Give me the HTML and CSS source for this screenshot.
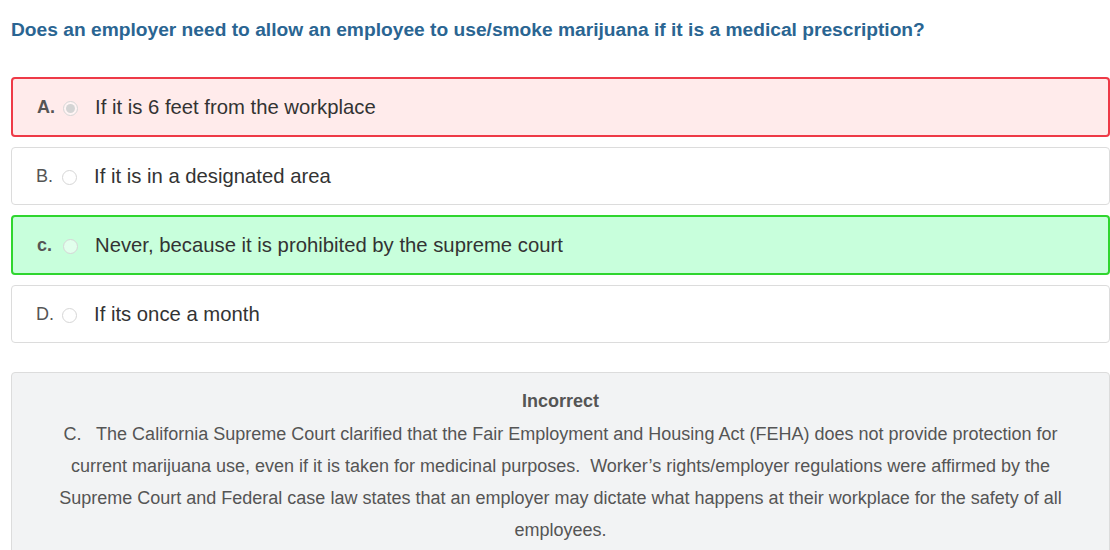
FILE: index.html
```html
<!DOCTYPE html>
<html>
<head>
<meta charset="utf-8">
<link rel="stylesheet" href="styles.css">
</head>
<body>
<div class="quiz">
  <h2 class="question">Does an employer need to allow an employee to use/smoke marijuana if it is a medical prescription?</h2>
  <div class="options">
    <div class="option wrong">
      <span class="label bold">A.</span>
      <span class="radio checked"></span>
      <span class="text">If it is 6 feet from the workplace</span>
    </div>
    <div class="option">
      <span class="label">B.</span>
      <span class="radio"></span>
      <span class="text">If it is in a designated area</span>
    </div>
    <div class="option right">
      <span class="label bold">c.</span>
      <span class="radio"></span>
      <span class="text">Never, because it is prohibited by the supreme court</span>
    </div>
    <div class="option">
      <span class="label">D.</span>
      <span class="radio"></span>
      <span class="text">If its once a month</span>
    </div>
  </div>
  <div class="explain">
    <div class="verdict">Incorrect</div>
    <p class="reason">C.&nbsp;&nbsp; The California Supreme Court clarified that the Fair Employment and Housing Act (FEHA) does not provide protection for current marijuana use, even if it is taken for medicinal purposes.&nbsp; Worker’s rights/employer regulations were affirmed by the Supreme Court and Federal case law states that an employer may dictate what happens at their workplace for the safety of all employees.</p>
  </div>
</div>
</body>
</html>
```

FILE: styles.css
```css
html, body {
  margin: 0;
  padding: 0;
  background: #ffffff;
  font-family: "Liberation Sans", Arial, sans-serif;
}
.quiz {
  margin-left: 11px;
  width: 1099px;
  padding-top: 19px;
}
.question {
  margin: 0 0 36px 0;
  font-size: 19.2px;
  font-weight: bold;
  color: #2a6592;
  line-height: 22px;
}
.options {
  display: flex;
  flex-direction: column;
  gap: 10px;
}
.option {
  display: flex;
  align-items: center;
  height: 56px;
  border: 1px solid #dcdcdc;
  border-radius: 4px;
  padding-left: 24px;
  background: #ffffff;
}
.option.wrong {
  border: 2px solid #ee3a47;
  background: #ffebeb;
  padding-left: 24px;
}
.option.right {
  border: 2px solid #2fd62f;
  background: #c8ffdc;
  padding-left: 24px;
}
.label {
  font-size: 18px;
  color: #555555;
  width: 26px;
}
.label.bold {
  font-weight: bold;
}
.radio {
  width: 13px;
  height: 13px;
  border-radius: 50%;
  border: 1px solid #d6d6d6;
  background: rgba(255, 255, 255, 0.45);
  margin-top: 3px;
  margin-right: 17px;
  display: flex;
  align-items: center;
  justify-content: center;
}
.radio.checked::after {
  content: "";
  width: 9px;
  height: 9px;
  border-radius: 50%;
  background: #d4d4d4;
}
.text {
  font-size: 20.3px;
  color: #333333;
}
.explain {
  margin-top: 29px;
  background: #f2f3f4;
  border: 1px solid #dcdcdc;
  border-radius: 4px;
  padding: 16px 40px 20px;
  text-align: center;
  color: #555555;
}
.verdict {
  font-weight: bold;
  font-size: 18px;
  line-height: 24px;
  margin-bottom: 5px;
}
.reason {
  margin: 0;
  font-size: 18px;
  line-height: 32px;
}
```
